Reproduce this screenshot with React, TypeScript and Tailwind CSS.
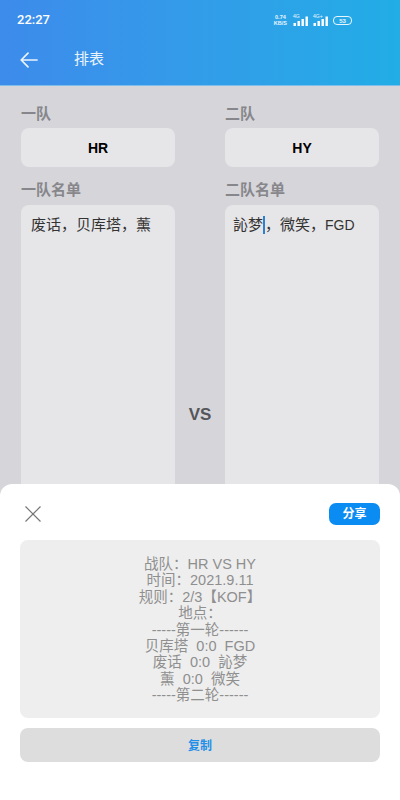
import React from "react";

const CJK = "font-['Liberation_Sans','Noto_Sans_CJK_SC',sans-serif]";

function Signal({ label }: { label: string }) {
  return (
    <div className="relative w-[15px] h-[10px]">
      <span className="absolute left-0 top-[-1.5px] text-[5px] leading-[5px] font-medium text-white/90">{label}</span>
      <svg width="15" height="10" viewBox="0 0 15 10" className="absolute left-0 top-0" fill="#fff">
        <rect x="0.5" y="7" width="2.4" height="3" />
        <rect x="4.5" y="5" width="2.4" height="5" />
        <rect x="8.5" y="3" width="2.4" height="7" />
        <rect x="12.5" y="0.5" width="2.4" height="9.5" />
      </svg>
    </div>
  );
}

function Label({ children }: { children: React.ReactNode }) {
  return <div className="text-[15px] leading-[20px] font-bold text-[#87878b]">{children}</div>;
}

function TeamBox({ children }: { children: React.ReactNode }) {
  return (
    <div className="mt-[4px] h-[39px] pt-[1px] rounded-lg bg-[#e6e6e8] flex items-center justify-center text-[14px] font-bold text-black">
      {children}
    </div>
  );
}

export default function App() {
  return (
    <div className={`relative w-[400px] h-[800px] overflow-hidden bg-[#d5d5da] ${CJK}`}>
      <header className="h-[86px] bg-gradient-to-r from-[#3d8beb] to-[#21ade6] border-b border-[#7fbdeb] flex flex-col">
        <div className="h-[40px] pt-[12px] px-[17px] flex items-start justify-between">
          <span className="text-[13px] leading-[16px] font-['Roboto',sans-serif] font-medium text-white">22:27</span>
          <div className="flex items-center gap-[5px] mr-[31px] mt-[3px]">
            <div className="text-[5.5px] leading-[5.5px] font-bold text-white/90 text-center mr-[1px]">
              <div>0.74</div>
              <div>KB/S</div>
            </div>
            <Signal label="4G" />
            <Signal label="4G+" />
            <div className="w-[19px] h-[9px] rounded-[4px] border border-white/90 flex items-center justify-center text-[6px] leading-none font-bold text-white/90">
              53
            </div>
          </div>
        </div>
        <div className="flex items-center h-[39px] pl-[20px]">
          <svg width="18" height="16" viewBox="0 0 18 16" fill="none" stroke="#fff" strokeWidth="1.7" strokeLinecap="round" strokeLinejoin="round" className="opacity-90">
            <path d="M17 8H1.5M8 1.2 1.2 8 8 14.8" />
          </svg>
          <span className="ml-[36px] text-[15px] font-normal text-white/90">排表</span>
        </div>
      </header>

      <main className="px-[21px] pt-[18px] flex">
        <div className="w-[154px] shrink-0">
          <Label>一队</Label>
          <TeamBox>HR</TeamBox>
          <div className="mt-[13px]">
            <Label>一队名单</Label>
          </div>
          <div className="mt-[5px] h-[420px] rounded-lg bg-[#e6e6e8] px-[10px] pt-[10px] text-[15px] leading-[20px] text-[#333333]">
            废话，贝库塔，薰
          </div>
        </div>
        <div className="flex-1 flex items-center justify-center pt-[100px]">
          <span className="text-[17px] font-bold text-[#55555a]">VS</span>
        </div>
        <div className="w-[154px] shrink-0">
          <Label>二队</Label>
          <TeamBox>HY</TeamBox>
          <div className="mt-[13px]">
            <Label>二队名单</Label>
          </div>
          <div className="mt-[5px] h-[420px] rounded-lg bg-[#e6e6e8] pl-[8px] pt-[10px] text-[15px] leading-[20px] text-[#333333] whitespace-nowrap">
            訫梦<span className="inline-block w-[2px] h-[18px] align-[-4px] bg-[#2f7fd0]" />，微笑，<span className="text-[14px]">FGD</span>
          </div>
        </div>
      </main>

      <section className="absolute left-0 right-0 bottom-0 h-[316px] bg-white rounded-t-[12px] px-[20px] pt-[19px]">
        <div className="flex items-center justify-between h-[22px]">
          <svg width="18" height="18" viewBox="0 0 18 18" fill="none" stroke="#77777a" strokeWidth="1.2" className="ml-[4px]">
            <path d="M1.5 1.5 16.5 16.5M16.5 1.5 1.5 16.5" />
          </svg>
          <button className="w-[51px] h-[22px] rounded-[7px] bg-[#0b8cf2] text-white text-[12px] font-bold flex items-center justify-center">
            分享
          </button>
        </div>
        <div className="mt-[15px] h-[178px] rounded-lg bg-[#eeeeee] pt-[16px] text-center text-[14.5px] leading-[16.4px] text-[#8f8f8f]">
          <div>战队：HR VS HY</div>
          <div>时间：2021.9.11</div>
          <div>规则：2/3【KOF】</div>
          <div>地点：</div>
          <div>-----第一轮------</div>
          <div>贝库塔&nbsp;&nbsp;0:0&nbsp;&nbsp;FGD</div>
          <div>废话&nbsp;&nbsp;0:0&nbsp;&nbsp;訫梦</div>
          <div>薰&nbsp;&nbsp;0:0&nbsp;&nbsp;微笑</div>
          <div>-----第二轮------</div>
        </div>
        <button className="mt-[10px] w-full h-[34px] pt-[1px] rounded-lg bg-[#dddddd] text-[#1f8fe8] text-[12px] font-bold flex items-center justify-center">
          复制
        </button>
      </section>
    </div>
  );
}
